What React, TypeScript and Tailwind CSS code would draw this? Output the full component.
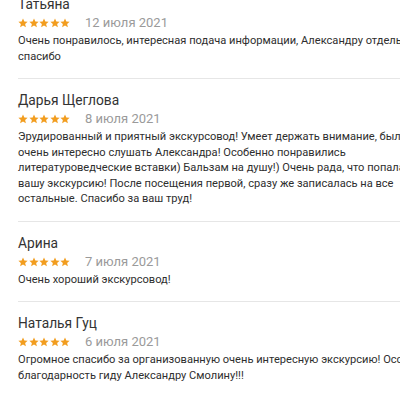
import React from "react";

const reviews = [
  {
    name: "Татьяна",
    date: "12 июля 2021",
    lines: [
      "Очень понравилось, интересная подача информации, Александру отдельное",
      "спасибо",
    ],
  },
  {
    name: "Дарья Щеглова",
    date: "8 июля 2021",
    lines: [
      "Эрудированный и приятный экскурсовод! Умеет держать внимание, было",
      "очень интересно слушать Александра! Особенно понравились",
      "литературоведческие вставки) Бальзам на душу!) Очень рада, что попала на",
      "вашу экскурсию! После посещения первой, сразу же записалась на все",
      "остальные. Спасибо за ваш труд!",
    ],
  },
  {
    name: "Арина",
    date: "7 июля 2021",
    lines: ["Очень хороший экскурсовод!"],
  },
  {
    name: "Наталья Гуц",
    date: "6 июля 2021",
    lines: [
      "Огромное спасибо за организованную очень интересную экскурсию! Особая",
      "благодарность гиду Александру Смолину!!!",
    ],
  },
];

function Star() {
  return (
    <svg width="10" height="10" viewBox="0 0 24 24" className="shrink-0">
      <path
        d="M12 1l3.2 7.3 7.9.7-6 5.2 1.8 7.8L12 17.9 5.1 22l1.8-7.8-6-5.2 7.9-.7z"
        fill="#f29d1f"
      />
    </svg>
  );
}

export default function App() {
  return (
    <div className="w-[400px] h-[400px] overflow-hidden bg-white font-['Roboto',sans-serif]">
      <div className="w-[440px] mt-[-18px] pl-[18px]">
        {reviews.map((r) => (
          <div key={r.name} className="border-t border-[#e6e6e6] pt-[11px] pb-[14px]">
            <div className="text-[13.75px] leading-[20px] text-[#333333] whitespace-nowrap">{r.name}</div>
            <div className="flex items-center h-[18px]">
              <div className="flex gap-[0.5px]">
                <Star />
                <Star />
                <Star />
                <Star />
                <Star />
              </div>
              <span className="ml-[15px] text-[13px] text-[#9a9a9a] whitespace-nowrap">{r.date}</span>
            </div>
            <div className="mt-[1px] text-[11.1px] leading-[15.5px] text-[#2e2e2e]">
              {r.lines.map((l, i) => (
                <div key={i} className="whitespace-nowrap">{l}</div>
              ))}
            </div>
          </div>
        ))}
      </div>
    </div>
  );
}
